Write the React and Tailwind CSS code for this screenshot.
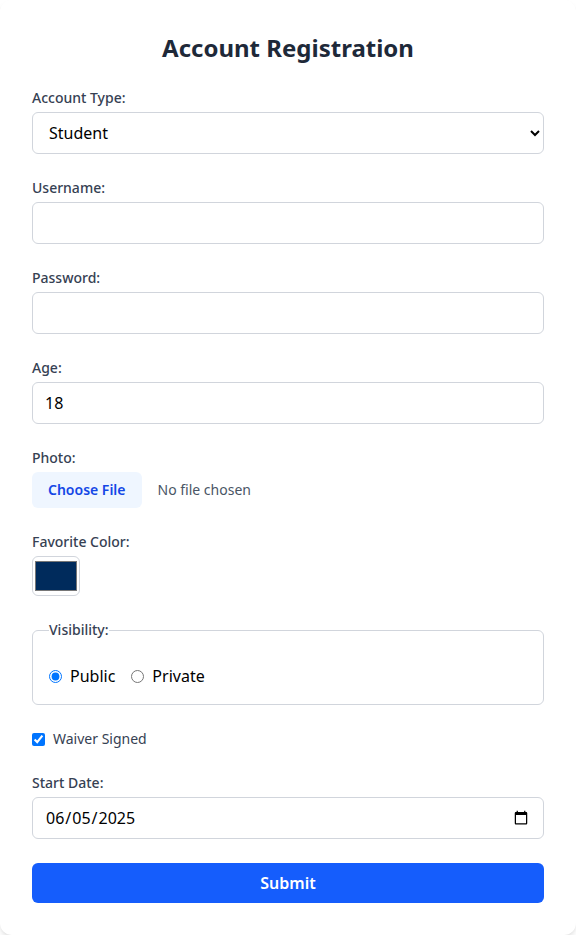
import { useState } from "react";

const inputClass =
  "block w-full rounded-md border border-gray-300 px-3 py-2 text-base text-black focus:outline-none";

function Field({ label, children }) {
  return (
    <div>
      <label className="mb-1 block text-sm font-medium text-gray-700">{label}</label>
      {children}
    </div>
  );
}

export default function App() {
  const [accountType, setAccountType] = useState("Student");
  const [age, setAge] = useState("18");
  const [color, setColor] = useState("#002b5c");
  const [visibility, setVisibility] = useState("public");
  const [waiver, setWaiver] = useState(true);
  const [startDate, setStartDate] = useState("2025-06-05");

  return (
    <div className="min-h-screen bg-white font-['Noto_Sans',sans-serif]">
      <form
        className="mx-auto max-w-xl rounded-xl bg-white p-8 shadow-md"
        onSubmit={(e) => e.preventDefault()}
      >
        <h2 className="mb-6 text-center text-2xl font-bold text-gray-800">Account Registration</h2>

        <div className="flex flex-col gap-6">
          <Field label="Account Type:">
            <select className={inputClass} value={accountType} onChange={(e) => setAccountType(e.target.value)}>
              <option>Student</option>
              <option>Teacher</option>
              <option>Admin</option>
            </select>
          </Field>

          <Field label="Username:">
            <input type="text" className={inputClass} />
          </Field>

          <Field label="Password:">
            <input type="password" className={inputClass} />
          </Field>

          <Field label="Age:">
            <input type="number" className={inputClass} value={age} onChange={(e) => setAge(e.target.value)} />
          </Field>

          <Field label="Photo:">
            <input
              type="file"
              className="block text-sm text-gray-600 file:mr-4 file:rounded-md file:border-0 file:bg-blue-50 file:px-4 file:py-2 file:text-sm file:font-semibold file:text-blue-700"
            />
          </Field>

          <Field label="Favorite Color:">
            <input
              type="color"
              className="block h-10 w-12 rounded-md border border-gray-300"
              value={color}
              onChange={(e) => setColor(e.target.value)}
            />
          </Field>

          <fieldset className="rounded-md border border-gray-300 p-4">
            <legend className="text-sm font-medium text-gray-700">Visibility:</legend>
            <div className="mt-2 flex items-center gap-4 text-base text-black">
              <label className="flex items-center">
                <input
                  type="radio"
                  name="visibility"
                  checked={visibility === "public"}
                  onChange={() => setVisibility("public")}
                />
                <span className="ml-2">Public</span>
              </label>
              <label className="flex items-center">
                <input
                  type="radio"
                  name="visibility"
                  checked={visibility === "private"}
                  onChange={() => setVisibility("private")}
                />
                <span className="ml-2">Private</span>
              </label>
            </div>
          </fieldset>

          <label className="flex items-center text-sm text-gray-700">
            <input type="checkbox" checked={waiver} onChange={(e) => setWaiver(e.target.checked)} />
            <span className="ml-2">Waiver Signed</span>
          </label>

          <Field label="Start Date:">
            <input
              type="date"
              className={inputClass}
              value={startDate}
              onChange={(e) => setStartDate(e.target.value)}
            />
          </Field>

          <button
            type="submit"
            className="w-full rounded-md bg-blue-600 py-2 text-base font-semibold text-white"
          >
            Submit
          </button>
        </div>
      </form>
    </div>
  );
}
